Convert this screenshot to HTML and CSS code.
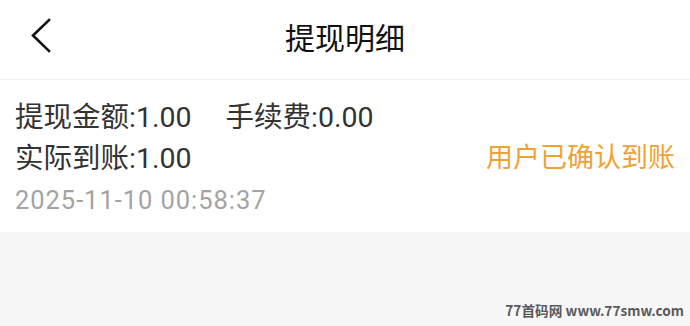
FILE: index.html
```html
<!DOCTYPE html>
<html>
<head>
<meta charset="utf-8">
<link rel="stylesheet" href="styles.css">
</head>
<body>
<div class="page">
  <header class="nav">
    <svg class="back" width="24" height="36" viewBox="0 0 24 36"><polyline points="18,3 2,18.5 18,34" fill="none" stroke="#111" stroke-width="2.6" stroke-linecap="square"/></svg>
    <div class="title">提现明细</div>
  </header>
  <section class="card">
    <div class="row"><span>提现金额:1.00</span><span class="fee">手续费:0.00</span></div>
    <div class="row between"><span>实际到账:1.00</span><span class="status">用户已确认到账</span></div>
    <div class="time">2025-11-10 00:58:37</div>
  </section>
  <div class="rest">
    <div class="mark">77首码网 www.77smw.com</div>
  </div>
</div>
</body>
</html>
```
FILE: styles.css
```css
html, body { margin: 0; padding: 0; }
body { width: 690px; height: 326px; overflow: hidden; background: #f7f7f7; font-family: Roboto, "Noto Sans CJK SC", sans-serif; }
.page { display: flex; flex-direction: column; height: 326px; }
.nav { height: 79px; background: #fff; border-bottom: 1px solid #f1f1f1; display: flex; align-items: center; justify-content: center; position: relative; }
.back { position: absolute; left: 31px; top: 17px; }
.title { font-size: 30px; color: #111; line-height: 1; margin-top: -2px; }
.card { background: #fff; padding: 16.5px 15px 11.5px; display: flex; flex-direction: column; }
.row { font-size: 28.5px; color: #333; line-height: 41px; display: flex; }
.fee { margin-left: 34px; }
.between { justify-content: space-between; }
.status { color: #efa232; font-size: 27px; }
.time { font-size: 25.5px; letter-spacing: 0.95px; color: #a3a3a3; line-height: 42px; }
.rest { flex: 1; display: flex; align-items: flex-end; justify-content: flex-end; padding: 0 6px 6px 0; }
.mark { font-family: "Noto Sans CJK SC", sans-serif; font-weight: bold; font-size: 13.7px; color: #5a5a5a; }
```
